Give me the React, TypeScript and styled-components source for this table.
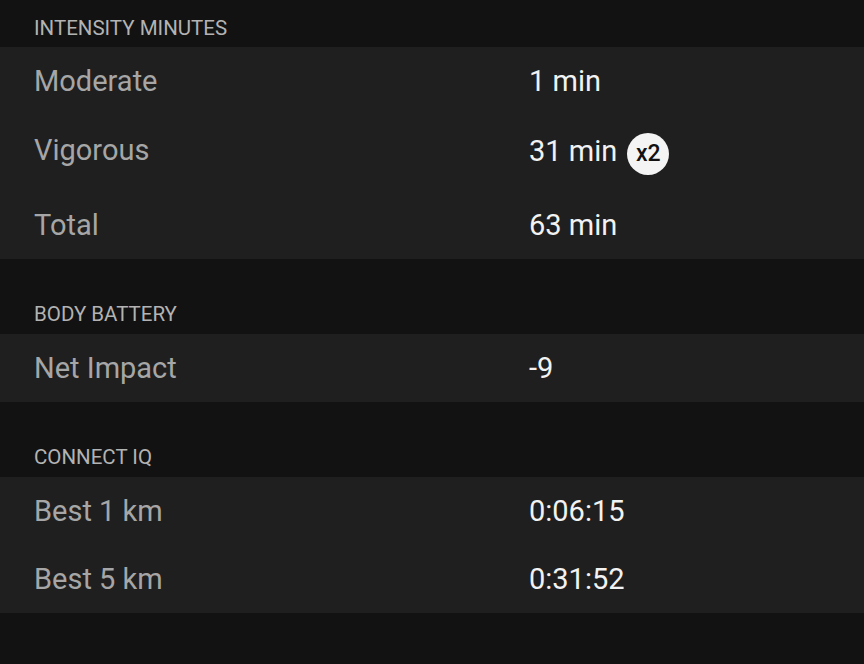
import React from 'react';
import styled, { createGlobalStyle } from 'styled-components';

const GlobalStyle = createGlobalStyle`
  html, body {
    margin: 0;
    padding: 0;
    background: #121212;
  }
  body {
    font-family: Roboto, 'Noto Sans', sans-serif;
  }
`;

type Row = { label: string; value: string; badge?: string; tall?: boolean };
type Section = { title: string; rows: Row[]; first?: boolean };

const sections: Section[] = [
  {
    title: 'INTENSITY MINUTES',
    first: true,
    rows: [
      { label: 'Moderate', value: '1 min' },
      { label: 'Vigorous', value: '31 min', badge: 'x2', tall: true },
      { label: 'Total', value: '63 min' },
    ],
  },
  {
    title: 'BODY BATTERY',
    rows: [{ label: 'Net Impact', value: '-9' }],
  },
  {
    title: 'CONNECT IQ',
    rows: [
      { label: 'Best 1 km', value: '0:06:15' },
      { label: 'Best 5 km', value: '0:31:52' },
    ],
  },
];

const App: React.FC = () => {
  return (
    <Page>
      <GlobalStyle />
      {sections.map((section) => (
        <div key={section.title}>
          <SectionHeader $first={section.first}>{section.title}</SectionHeader>
          <Panel>
            {section.rows.map((row) => (
              <StatRow key={row.label} $tall={row.tall}>
                <Label>{row.label}</Label>
                <Value>
                  {row.value}
                  {row.badge && <Badge>{row.badge}</Badge>}
                </Value>
              </StatRow>
            ))}
          </Panel>
        </div>
      ))}
    </Page>
  );
};

const Page = styled.div`
  width: 864px;
  height: 664px;
  background: #121212;
  overflow: hidden;
`;

const SectionHeader = styled.div<{ $first?: boolean }>`
  display: flex;
  align-items: flex-end;
  height: ${(p) => (p.$first ? '47px' : '75px')};
  padding: 0 34px ${(p) => (p.$first ? '7px' : '8px')};
  box-sizing: border-box;
  font-size: 20.5px;
  line-height: 24px;
  color: #b3b3b3;
`;

const Panel = styled.div`
  background: #1f1f1f;
`;

const StatRow = styled.div<{ $tall?: boolean }>`
  display: grid;
  grid-template-columns: 495px 1fr;
  align-items: center;
  height: ${(p) => (p.$tall ? '76px' : '68px')};
  padding: 0 34px ${(p) => (p.$tall ? '6px' : '0')};
  box-sizing: border-box;
  font-size: 29px;
  line-height: 34px;
`;

const Label = styled.span`
  color: #a6a6a6;
`;

const Value = styled.span`
  display: flex;
  align-items: flex-end;
  color: #f2f2f2;
`;

const Badge = styled.span`
  display: inline-flex;
  align-items: center;
  justify-content: center;
  width: 42px;
  height: 42px;
  margin-left: 10px;
  margin-bottom: -7px;
  border-radius: 50%;
  background: #f4f4f4;
  color: #111;
  font-size: 23px;
  line-height: 1;
  font-weight: 500;
`;

export default App;
